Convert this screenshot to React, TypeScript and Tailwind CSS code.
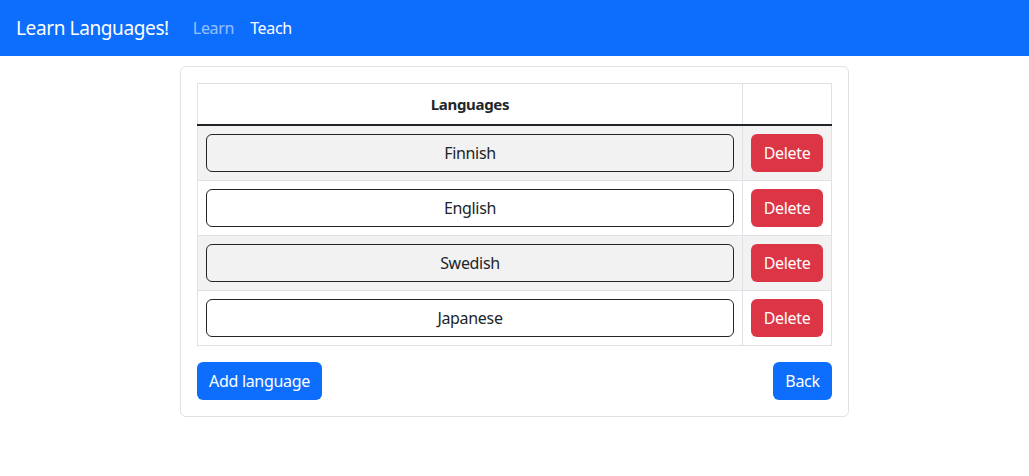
import { useState } from 'react';

const initialLanguages = ['Finnish', 'English', 'Swedish', 'Japanese'];

export default function App() {
    const [languages, setLanguages] = useState(initialLanguages);

    const updateLanguage = (index: number, value: string) => {
        setLanguages(languages.map((l, i) => (i === index ? value : l)));
    };

    return (
        <div className="min-h-[476px] bg-white text-[#212529] font-['Noto_Sans','Open_Sans',sans-serif] text-base tracking-[-0.02em]">
            {/* Navbar */}
            <nav className="h-14 bg-[#0d6efd] flex items-center px-4">
                <span className="text-[19px] text-white mr-4 tracking-[-0.02em]">Learn Languages!</span>
                <a className="px-2 text-white/55">Learn</a>
                <a className="px-2 text-white">Teach</a>
            </nav>

            {/* Card */}
            <div className="w-[669px] ml-[180px] mt-[10px] border border-[#dee2e6] rounded-md p-4">
                <table className="w-full border-collapse border border-[#dee2e6]">
                    <thead>
                        <tr>
                            <th className="h-[41px] px-2 py-2 font-bold text-[15px] text-center border border-[#dee2e6]">
                                Languages
                            </th>
                            <th className="border border-[#dee2e6] w-[89px]"></th>
                        </tr>
                    </thead>
                    <tbody className="border-t-2 border-t-[#212529]">
                        {languages.map((lang, i) => (
                            <tr
                                key={i}
                                className={i % 2 === 0 ? 'bg-[#f2f2f2]' : 'bg-white'}
                            >
                                <td className="p-2 border border-[#dee2e6]">
                                    <input
                                        value={lang}
                                        onChange={(e) => updateLanguage(i, e.target.value)}
                                        className="w-full h-[38px] px-3 text-center bg-transparent border border-[#212529] rounded-md outline-none tracking-[-0.02em]"
                                    />
                                </td>
                                <td className="p-2 border border-[#dee2e6]">
                                    <button
                                        onClick={() => setLanguages(languages.filter((_, j) => j !== i))}
                                        className="h-[38px] w-[72px] bg-[#dc3545] text-white rounded-md"
                                    >
                                        Delete
                                    </button>
                                </td>
                            </tr>
                        ))}
                    </tbody>
                </table>

                {/* Actions */}
                <div className="flex justify-between mt-4">
                    <button
                        onClick={() => setLanguages([...languages, ''])}
                        className="h-[38px] w-[125px] bg-[#0d6efd] text-white rounded-md"
                    >
                        Add language
                    </button>
                    <button className="h-[38px] w-[59px] bg-[#0d6efd] text-white rounded-md">
                        Back
                    </button>
                </div>
            </div>
        </div>
    );
}
